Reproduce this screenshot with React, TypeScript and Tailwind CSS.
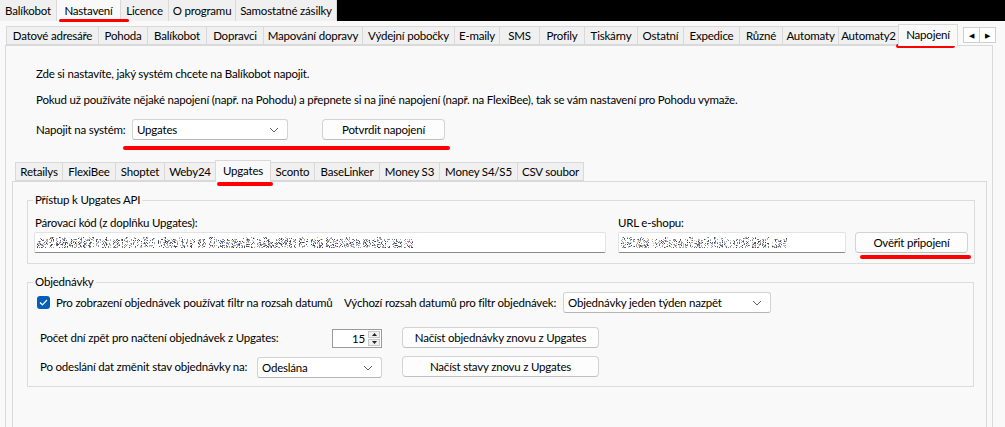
import React, { useMemo } from "react";

type Tab = { label: string; w: number };

const topTabs: Tab[] = [
  { label: "Balíkobot", w: 57 },
  { label: "Nastavení", w: 64 },
  { label: "Licence", w: 48 },
  { label: "O programu", w: 67 },
  { label: "Samostatné zásilky", w: 101 },
];

// widths include the 1px border shared with the neighbouring tab
const settingsTabs: Tab[] = [
  { label: "Datové adresáře", w: 93 },
  { label: "Pohoda", w: 50 },
  { label: "Balíkobot", w: 60 },
  { label: "Dopravci", w: 58 },
  { label: "Mapování dopravy", w: 100 },
  { label: "Výdejní pobočky", w: 93 },
  { label: "E-maily", w: 46 },
  { label: "SMS", w: 41 },
  { label: "Profily", w: 46 },
  { label: "Tiskárny", w: 54 },
  { label: "Ostatní", w: 47 },
  { label: "Expedice", w: 57 },
  { label: "Různé", w: 44 },
  { label: "Automaty", w: 57 },
  { label: "Automaty2", w: 61 },
  { label: "Napojení", w: 60 },
];

const systemTabs: Tab[] = [
  { label: "Retailys", w: 48 },
  { label: "FlexiBee", w: 54 },
  { label: "Shoptet", w: 50 },
  { label: "Weby24", w: 52 },
  { label: "Upgates", w: 56 },
  { label: "Sconto", w: 45 },
  { label: "BaseLinker", w: 66 },
  { label: "Money S3", w: 61 },
  { label: "Money S4/S5", w: 79 },
  { label: "CSV soubor", w: 67 },
];

// Scrambled placeholder standing in for a hidden value inside a text box
function Scramble({ width, seed }: { width: number; seed: number }) {
  const rects = useMemo(() => {
    let s = seed;
    const rnd = () => {
      s = (s * 1103515245 + 12345) & 0x7fffffff;
      return s / 0x7fffffff;
    };
    const dark = ["#3c4450", "#5c636c", "#7b828a", "#9aa0a6", "#b9bec3"];
    const tint = ["#e0a46e", "#6a90d8", "#d48bb0", "#8fb0e6", "#e9c09a"];
    const out: { x: number; y: number; c: string }[] = [];
    let x = 0;
    while (x < width) {
      const gw = 2 + Math.floor(rnd() * 5);
      const top = rnd() < 0.35 ? 0 : 2;
      for (let gx = x; gx < Math.min(width, x + gw); gx++) {
        for (let y = top; y < 11; y++) {
          const r = rnd();
          if (r < 0.32) out.push({ x: gx, y, c: dark[Math.floor(rnd() * dark.length)] });
          else if (r < 0.42) out.push({ x: gx, y, c: tint[Math.floor(rnd() * tint.length)] });
        }
      }
      x += gw + Math.floor(rnd() * 2) + (rnd() < 0.12 ? 2 : 0);
    }
    return out;
  }, [width, seed]);
  return (
    <svg width={width} height={11} className="block" shapeRendering="crispEdges">
      {rects.map((r, i) => (
        <rect key={i} x={r.x} y={r.y} width={1} height={1} fill={r.c} />
      ))}
    </svg>
  );
}

function Chevron() {
  return (
    <svg width="10" height="6" viewBox="0 0 10 6" className="block">
      <path d="M1 1 L5 5 L9 1" fill="none" stroke="#5f5f5f" strokeWidth="1" />
    </svg>
  );
}

function Combo({ value, w }: { value: string; w: string }) {
  return (
    <div
      className={`${w} h-[21px] flex items-center justify-between bg-white border border-[#d3d3d3] border-b-[#b5b5b5] rounded-[3px] pl-[4px] pr-[8px] whitespace-nowrap`}
    >
      <span>{value}</span>
      <Chevron />
    </div>
  );
}

function Button({ label, w }: { label: string; w: string }) {
  return (
    <div
      className={`${w} h-[21px] flex items-center justify-center bg-[#fdfdfd] border border-[#d3d3d3] border-b-[#c0c0c0] rounded-[4px] whitespace-nowrap`}
    >
      {label}
    </div>
  );
}

function TextBox({ w, seed, noise }: { w: string; seed: number; noise: number }) {
  return (
    <div className={`${w} h-[21px] flex items-center bg-white border border-[#e3e3e3] border-b-[#8a8a8a] rounded-[2px] pl-[2px]`}>
      <Scramble width={noise} seed={seed} />
    </div>
  );
}

function TabStrip({ tabs, active }: { tabs: Tab[]; active: number }) {
  return (
    <div className="flex items-end">
      {tabs.map((t, i) => {
        const on = i === active;
        return (
          <div
            key={t.label}
            style={{ width: t.w }}
            className={`${i > 0 ? "-ml-px" : ""} ${
              on
                ? "relative z-10 h-[22px] -mb-px flex items-start justify-center pt-[2px] bg-[#f9f9f9] border border-b-0 border-[#d9d9d9] whitespace-nowrap"
                : "h-[19px] flex items-center justify-center bg-[#f0f0f0] border border-[#d9d9d9] whitespace-nowrap"
            }`}
          >
            {t.label}
          </div>
        );
      })}
    </div>
  );
}

function RedMark({ className }: { className: string }) {
  return <div className={`absolute bg-[#ff0000] rounded-full ${className}`} />;
}

export default function App() {
  return (
    <div className="relative w-[1005px] h-[427px] overflow-hidden bg-[#f9f9f9] text-[11.5px] leading-[16px] tracking-[-0.2px] text-black font-['Lato',sans-serif]">
      {/* main menu tabs */}
      <div className="flex h-[21px] bg-black">
        {topTabs.map((t, i) => (
          <div
            key={t.label}
            style={{ width: t.w }}
            className={`h-[21px] flex items-center justify-center border-r border-[#d9d9d9] whitespace-nowrap ${
              i === 1 ? "bg-[#f9f9f9]" : "bg-[#f0f0f0]"
            }`}
          >
            {t.label}
          </div>
        ))}
      </div>

      {/* settings sections */}
      <div className="pt-[4px] pl-[5px]">
        <div className="flex items-end h-[20px] pl-px">
          <TabStrip tabs={settingsTabs} active={15} />
          <div className="flex ml-[5px] self-start mt-[2px]">
            <div className="w-[17px] h-[16px] flex items-center justify-center bg-white border border-[#cfcfcf] text-[7px] leading-none">
              ◀
            </div>
            <div className="w-[17px] h-[16px] -ml-px flex items-center justify-center bg-white border border-[#cfcfcf] text-[7px] leading-none">
              ▶
            </div>
          </div>
        </div>

        <div className="w-[988px] h-[400px] border border-[#d9d9d9] bg-[#f9f9f9]">
          <div className="pl-[30px] pt-[20px] whitespace-nowrap">
            <p>Zde si nastavíte, jaký systém chcete na Balíkobot napojit.</p>
            <p className="mt-[10px]">
              Pokud už používáte nějaké napojení (např. na Pohodu) a přepnete si na jiné napojení (např. na FlexiBee), tak se vám
              nastavení pro Pohodu vymaže.
            </p>
            <div className="flex items-center mt-[11px]">
              <span className="w-[96px]">Napojit na systém:</span>
              <Combo value="Upgates" w="w-[156px]" />
              <div className="ml-[34px]">
                <Button label="Potvrdit napojení" w="w-[123px]" />
              </div>
            </div>
          </div>

          {/* connected systems */}
          <div className="ml-[6px] mt-[21px]">
            <div className="flex items-end h-[20px] pl-[3px]">
              <TabStrip tabs={systemTabs} active={4} />
            </div>
            <div className="w-[975px] h-[260px] border border-[#d9d9d9] bg-[#f9f9f9] pl-[14px] pt-[10px] whitespace-nowrap">
              <fieldset className="w-[947px] border border-[#dcdcdc] px-[6px] pb-[10px]">
                <legend className="px-[2px] ml-[-1px]">Přístup k Upgates API</legend>
                <div className="flex items-end mt-[7px]">
                  <div className="w-[572px]">
                    <div className="pl-px mb-[1px]">Párovací kód (z doplňku Upgates):</div>
                    <TextBox w="w-[572px]" seed={7} noise={376} />
                  </div>
                  <div className="w-[228px] ml-[12px]">
                    <div className="mb-[1px]">URL e-shopu:</div>
                    <TextBox w="w-[228px]" seed={91} noise={166} />
                  </div>
                  <div className="ml-[9px]">
                    <Button label="Ověřit připojení" w="w-[113px]" />
                  </div>
                </div>
              </fieldset>

              <fieldset className="w-[947px] mt-[10px] border border-[#dcdcdc] px-[6px] pb-[8px]">
                <legend className="px-[2px] ml-[-1px]">Objednávky</legend>
                <div className="flex items-center mt-[2px]">
                  <div className="w-[310px] flex items-center pl-[3px]">
                    <div className="w-[13px] h-[13px] rounded-[3px] bg-[#005fb8] flex items-center justify-center">
                      <svg width="9" height="7" viewBox="0 0 9 7">
                        <path d="M1 3.5 L3.4 5.8 L8 1" fill="none" stroke="white" strokeWidth="1.2" />
                      </svg>
                    </div>
                    <span className="ml-[6px]">Pro zobrazení objednávek používat filtr na rozsah datumů</span>
                  </div>
                  <span className="w-[219px]">Výchozí rozsah datumů pro filtr objednávek:</span>
                  <Combo value="Objednávky jeden týden nazpět" w="w-[208px]" />
                </div>

                <div className="flex items-center mt-[14px]">
                  <span className="w-[298px] pl-[6px]">Počet dní zpět pro načtení objednávek z Upgates:</span>
                  <div className="w-[50px] h-[19px] mt-[2px] flex bg-white border border-[#9a9a9a]">
                    <span className="flex-1 text-right pr-[2px] leading-[17px]">15</span>
                    <div className="w-[14px] flex flex-col gap-px p-px">
                      <div className="flex-1 bg-[#f0f0f0] border border-[#c8c8c8] flex items-center justify-center">
                        <svg width="5" height="3" viewBox="0 0 5 3">
                          <path d="M0 3 L2.5 0 L5 3 Z" fill="#222" />
                        </svg>
                      </div>
                      <div className="flex-1 bg-[#f0f0f0] border border-[#c8c8c8] flex items-center justify-center">
                        <svg width="5" height="3" viewBox="0 0 5 3">
                          <path d="M0 0 L2.5 3 L5 0 Z" fill="#222" />
                        </svg>
                      </div>
                    </div>
                  </div>
                  <div className="ml-[20px]">
                    <Button label="Načíst objednávky znovu z Upgates" w="w-[197px]" />
                  </div>
                </div>

                <div className="flex items-center mt-[7px]">
                  <span className="w-[223px] pl-[6px]">Po odeslání dat změnit stav objednávky na:</span>
                  <div className="mt-[2px]">
                    <Combo value="Odeslána" w="w-[125px]" />
                  </div>
                  <div className="ml-[20px]">
                    <Button label="Načíst stavy znovu z Upgates" w="w-[197px]" />
                  </div>
                </div>
              </fieldset>
            </div>
          </div>
        </div>
      </div>

      {/* highlight strokes */}
      <RedMark className="left-[59px] top-[19px] w-[70px] h-[3px]" />
      <RedMark className="left-[896px] top-[44px] w-[59px] h-[4px]" />
      <RedMark className="left-[123px] top-[146px] w-[327px] h-[4px]" />
      <RedMark className="left-[217px] top-[182px] w-[56px] h-[4px]" />
      <RedMark className="left-[860px] top-[255px] w-[111px] h-[4px]" />
    </div>
  );
}
